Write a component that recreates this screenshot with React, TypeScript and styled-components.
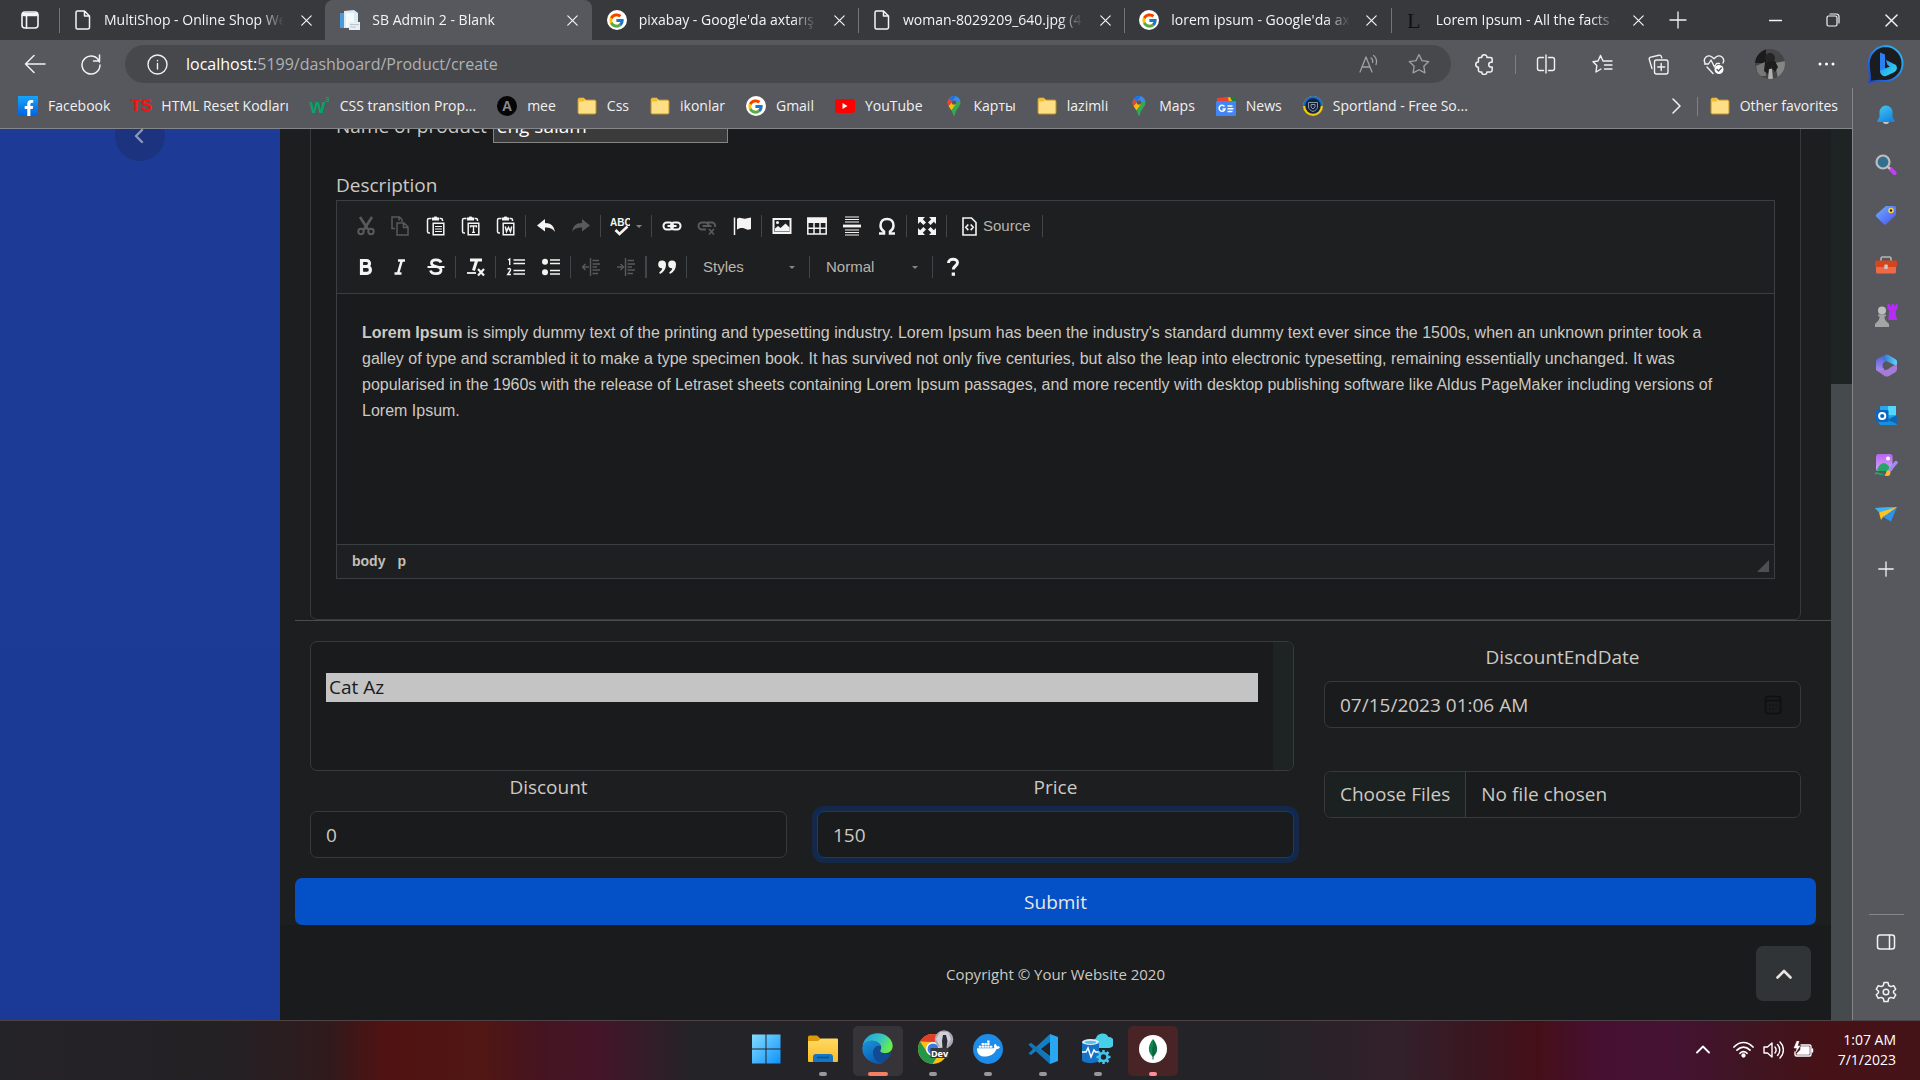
import React from "react";
import styled, { createGlobalStyle, css } from "styled-components";
import { FcGoogle } from "react-icons/fc";
import { FaDocker, FaFacebookF } from "react-icons/fa";

const ui = `"Open Sans", "Noto Sans", sans-serif`;
const arial = `"Liberation Sans", Arial, sans-serif`;

const GlobalStyle = createGlobalStyle`
  *, *::before, *::after { box-sizing: border-box; }
  html, body, #root { height: 100%; }
  body { margin: 0; background: #191b1c; font-family: ${ui}; color: #cdc9c3; overflow: hidden; }
  button, input, select { font: inherit; color: inherit; margin: 0; }
  button { border: 0; padding: 0; background: none; cursor: pointer; }
  svg { display: block; flex: none; }
  a { color: inherit; text-decoration: none; }
`;

/* ---------- frame ---------- */
const Screen = styled.div`
  height: 100vh;
  display: grid;
  grid-template-rows: 40px minmax(0, 1fr) 60px;
`;
const Center = styled.div`
  display: flex;
  align-items: center;
  justify-content: center;
`;
const Line = styled.svg<{ $w?: number }>`
  fill: none;
  stroke: currentColor;
  stroke-width: ${(p) => p.$w ?? 1.3};
  stroke-linecap: round;
  stroke-linejoin: round;
`;

/* ---------- tabs ---------- */
const TabStrip = styled.header`
  display: flex;
  background: #38393d;
  color: #f4f4f4;
  padding-left: 1px;
`;
const TabActions = styled.button`
  width: 58px;
  display: flex;
  align-items: center;
  justify-content: center;
  flex: none;
`;
const Tabs = styled.nav`
  flex: 0 1 1598px;
  display: grid;
  grid-template-columns: repeat(6, minmax(0, 1fr));
`;
const Tab = styled.div<{ $active?: boolean; $divider?: boolean }>`
  display: flex;
  align-items: center;
  gap: 12px;
  padding: 0 9px 0 15px;
  position: relative;
  ${(p) => p.$active && css`background: #57585d; border-radius: 8px 8px 0 0;`}
  ${(p) =>
    p.$divider &&
    css`
      &::before {
        content: "";
        position: absolute;
        left: 0;
        top: 8px;
        height: 25px;
        width: 1px;
        background: #737478;
      }
    `}
`;
const TabTitle = styled.a`
  flex: 1;
  min-width: 0;
  overflow: hidden;
  white-space: nowrap;
  font-size: 14px;
  line-height: 24px;
  mask-image: linear-gradient(90deg, #000 calc(100% - 24px), transparent);
`;
const TabClose = styled.button`
  width: 20px;
  height: 20px;
  display: flex;
  align-items: center;
  justify-content: center;
`;
const NewTab = styled.button`
  width: 42px;
  display: flex;
  align-items: center;
  justify-content: center;
`;
const WindowButtons = styled.div`
  margin-left: auto;
  display: flex;
`;
const WindowButton = styled.button`
  width: 58px;
  display: flex;
  align-items: center;
  justify-content: center;
`;

/* ---------- browser body ---------- */
const Browser = styled.div`
  display: grid;
  grid-template-columns: minmax(0, 1fr) 68px;
  grid-template-rows: 48px 41px minmax(0, 1fr);
  background: #57585d;
  color: #f1f1f1;
  min-height: 0;
`;
const Toolbar = styled.div`
  display: flex;
  align-items: center;
  gap: 4px;
  padding: 0 0 0 9px;
`;
const ToolButton = styled.button`
  width: 52px;
  height: 36px;
  display: flex;
  align-items: center;
  justify-content: center;
`;
const Address = styled.div`
  flex: 1;
  height: 38px;
  border-radius: 19px;
  background: #47484c;
  display: flex;
  align-items: center;
  padding: 0 16px 0 22px;
  margin: 0 4px;
  gap: 18px;
`;
const Url = styled.a`
  flex: 1;
  font-size: 16px;
  line-height: 24px;
  color: #b0b1b3;
  b { font-weight: 400; color: #ffffff; }
`;
const AddressIcon = styled.button`
  width: 32px;
  color: #a0a1a4;
  display: flex;
  justify-content: center;
`;
const ToolDivider = styled.i`
  width: 1px;
  height: 19px;
  background: #808186;
`;
const Favorites = styled.nav`
  display: flex;
  align-items: center;
  gap: 21px;
  padding: 0 14px 4px 18px;
  border-bottom: 1px solid #85868a;
  font-size: 14px;
`;
const Favorite = styled.a`
  display: flex;
  align-items: center;
  gap: 10px;
  white-space: nowrap;
  line-height: 24px;
`;
const FavoritesEnd = styled.div`
  margin-left: auto;
  display: flex;
  align-items: center;
  gap: 12px;
`;
const WordMark = styled.span<{ $color: string; $size: number }>`
  width: 20px;
  font: 700 ${(p) => p.$size}px/20px "Liberation Sans", sans-serif;
  color: ${(p) => p.$color};
  text-align: center;
  display: flex;
  justify-content: center;
  sup { font-size: 8px; line-height: 8px; }
`;
const RoundMark = styled.span<{ $bg: string }>`
  width: 20px;
  height: 20px;
  border-radius: 10px;
  background: ${(p) => p.$bg};
  display: flex;
  align-items: center;
  justify-content: center;
`;

/* ---------- edge side bar ---------- */
const BingCell = styled.button`
  display: flex;
  align-items: center;
  justify-content: center;
`;
const SideBar = styled.aside`
  grid-row: 2 / 4;
  grid-column: 2;
  border-left: 1px solid #85868a;
  display: flex;
  flex-direction: column;
  align-items: center;
  padding: 2px 1px 3px 0;
`;
const SideButton = styled.button<{ $tall?: boolean }>`
  width: 48px;
  height: ${(p) => (p.$tall ? 58 : 50)}px;
  display: flex;
  align-items: center;
  justify-content: center;
  flex: none;
`;
const SideRule = styled.hr`
  width: 35px;
  border: 0;
  border-top: 1px solid #85868a;
  margin: auto 0 2px;
`;

/* ---------- page ---------- */
const Page = styled.div`
  grid-row: 3;
  grid-column: 1;
  display: grid;
  grid-template-columns: 280px minmax(0, 1fr) 21px;
  min-height: 0;
  background: #1d1e20;
  color: #cdc9c3;
`;
const AdminMenu = styled.aside`
  background: linear-gradient(#1c3a96, #1b3a97);
  overflow: hidden;
  display: flex;
  align-items: flex-start;
  justify-content: center;
`;
const MenuToggle = styled.button`
  width: 50px;
  height: 50px;
  border-radius: 25px;
  background: #1c3380;
  color: #8d96b8;
  display: flex;
  align-items: center;
  justify-content: center;
  margin-top: -18px;
  padding-right: 2px;
`;
const ScrollTrack = styled.div`
  background: #1e2324;
  display: flex;
  flex-direction: column;
  justify-content: flex-end;
`;
const ScrollThumb = styled.div`
  height: calc(500% / 7);
  background: #454a4d;
`;
const Content = styled.main`
  overflow: hidden;
  min-height: 0;
  display: flex;
  flex-direction: column;
  justify-content: flex-end;
`;
const ProductForm = styled.form`
  padding-left: 15px;
  font-size: 19px;
  line-height: 30px;
`;
const Card = styled.section`
  margin: 0 30px 0 15px;
  border: 1px solid #37393b;
  border-radius: 7px;
  background: #191b1c;
  padding: 20px 25px 40px;
`;
const NameRow = styled.div`
  display: flex;
  align-items: center;
  gap: 6px;
  margin-bottom: 27px;
`;
const NameInput = styled.input`
  width: 235px;
  height: 35px;
  padding: 1px 3px;
  background: #3b3b3b;
  border: 1px solid #858585;
  color: #ffffff;
`;
const FieldLabel = styled.label<{ $center?: boolean }>`
  display: block;
  text-align: ${(p) => (p.$center ? "center" : "left")};
  ${(p) => p.$center && "margin-bottom: 9px;"}
`;
const Editor = styled.div`
  border: 1px solid #3a3f41;
  font-family: ${arial};
`;
const EditorTools = styled.div`
  background: #1e1f21;
  border-bottom: 1px solid #3a3f41;
  padding: 7px 12px 8px 11px;
  display: flex;
  flex-direction: column;
  gap: 5px;
`;
const ToolRow = styled.div`
  display: flex;
  align-items: center;
  height: 36px;
`;
const EditButton = styled.button<{ $off?: boolean; $wide?: boolean }>`
  width: ${(p) => (p.$wide ? 46 : 35)}px;
  height: 34px;
  display: flex;
  align-items: center;
  justify-content: center;
  gap: 6px;
  color: ${(p) => (p.$off ? "#595a5b" : "#f5f4f2")};
`;
const SourceButton = styled(EditButton)`
  width: auto;
  padding: 0 9px 0 13px;
  font-size: 15px;
  span { color: #b9b4ac; }
`;
const EditSeparator = styled.i`
  width: 1px;
  height: 22px;
  margin: 0 2px;
  background: #434648;
  & + & { margin-left: -2px; }
`;
const Combo = styled.div`
  width: 118px;
  display: grid;
  align-items: center;
  select {
    grid-area: 1 / 1;
    appearance: none;
    background: none;
    border: 0;
    padding: 0 10px 0 14px;
    height: 30px;
    font-size: 15px;
    color: #b9b4ac;
  }
  svg { grid-area: 1 / 1; justify-self: end; margin-right: 12px; pointer-events: none; }
`;
const EditArea = styled.div`
  height: 250px;
  padding: 26px 32px 24px 25px;
  font-size: 16px;
  line-height: 26px;
  outline: none;
  p { margin: 0; }
`;
const PathBar = styled.div`
  background: #1e1f21;
  border-top: 1px solid #3a3f41;
  height: 34px;
  display: flex;
  align-items: center;
  gap: 12px;
  padding: 0 5px 2px 15px;
  font-size: 14px;
  font-weight: 700;
  color: #c4bfb7;
  svg { margin-left: auto; align-self: flex-end; margin-bottom: 4px; }
`;
const Divider = styled.hr`
  border: 0;
  border-top: 1px solid #4a4c4e;
  margin: 0 0 20px;
`;
const Fields = styled.div`
  display: grid;
  grid-template-columns: repeat(3, minmax(0, 1fr));
  gap: 30px;
  padding: 0 30px 0 15px;
  margin-bottom: 20px;
`;
const LeftFields = styled.div`
  grid-column: span 2;
  display: grid;
  grid-template-columns: repeat(2, minmax(0, 1fr));
  column-gap: 30px;
`;
const RightFields = styled.div`
  padding-top: 1px;
`;
const control = css`
  display: block;
  width: 100%;
  background: #191b1c;
  border: 1px solid #37393b;
  border-radius: 7px;
  outline: 0;
`;
const CategoryBox = styled.div`
  ${control}
  grid-column: span 2;
  display: grid;
  grid-template-columns: minmax(0, 1fr) 20px;
  height: 130px;
  margin-bottom: 1px;
  overflow: hidden;
`;
const CategoryTrack = styled.div`
  background: #1e2324;
`;
const CategoryList = styled.select`
  border: 0;
  outline: 0;
  background: none;
  padding: 2px 15px;
  overflow: hidden;
  option {
    height: 29px;
    min-height: 29px;
    padding: 1px 3px 0;
    line-height: 28px;
  }
  option:checked {
    background: #c4c4c4 linear-gradient(#c4c4c4, #c4c4c4);
    color: #191b1c;
  }
`;
const TextInput = styled.input<{ $focused?: boolean }>`
  ${control}
  height: 47px;
  padding: 8px 15px 7px;
  ${(p) => p.$focused && css`border-color: #053d91; box-shadow: 0 0 0 5px #14284a;`}
`;
const DateBox = styled.div`
  ${control}
  height: 47px;
  display: flex;
  align-items: center;
  padding: 0 15px;
  margin-bottom: 43px;
  input { flex: 1; min-width: 0; border: 0; background: none; outline: 0; padding: 0; }
  button { color: #0f1011; width: 24px; display: flex; justify-content: center; }
`;
const FileInput = styled.input`
  ${control}
  height: 47px;
  padding: 0;
  line-height: 45px;
  &::file-selector-button {
    font: inherit;
    color: inherit;
    height: 45px;
    padding: 0 15px;
    margin-right: 15px;
    border: 0;
    border-right: 1px solid #3a3f41;
    border-radius: 6px 0 0 6px;
    background: #1b2021;
  }
`;
const Submit = styled.button`
  display: block;
  width: calc(100% - 15px);
  height: 47px;
  padding-top: 1px;
  border-radius: 7px;
  background: #0350c7;
  color: #e8e6e3;
`;
const Footer = styled.footer`
  height: 95px;
  flex: none;
  background: #191b1c;
  display: grid;
  grid-template-columns: 75px 1fr 75px;
  align-items: center;
  padding: 2px 20px 0;
  text-align: center;
  font-size: 15px;
  line-height: 20px;
  span { grid-column: 2; }
`;
const ToTop = styled.a`
  width: 55px;
  height: 55px;
  justify-self: end;
  border-radius: 7px;
  background: #303436;
  color: #e8e6e3;
  display: flex;
  align-items: center;
  justify-content: center;
`;

/* ---------- task bar ---------- */
const TaskBar = styled.footer`
  border-top: 1px solid #4e4448;
  background: linear-gradient(90deg, #242328 0, #242125 12%, #301a1c 17%, #501212 20%, #501713 25%,
    #461420 28%, #451428 31%, #242327 36%, #242328 66%, #33202a 73%, #3a1620 77%, #450f18 80%,
    #461030 83%, #451234 87%, #3f1522 91%, #461217 95%, #441318 100%);
  display: grid;
  grid-template-columns: 1fr auto 1fr;
  align-items: center;
  color: #ffffff;
`;
const Apps = styled.div`
  grid-column: 2;
  display: flex;
  gap: 5px;
`;
const AppButton = styled.button<{ $bg?: string; $bar?: string; $barWidth?: number }>`
  width: 50px;
  height: 50px;
  border-radius: 5px;
  background: ${(p) => p.$bg ?? "transparent"};
  display: grid;
  grid-template-rows: 46px 4px;
  justify-items: center;
  align-items: center;
  &::after {
    content: "";
    width: ${(p) => p.$barWidth ?? 8}px;
    height: 4px;
    border-radius: 2px;
    background: ${(p) => p.$bar ?? "#98979a"};
  }
`;
const Tray = styled.div`
  display: flex;
  justify-content: flex-end;
  align-items: center;
  gap: 9px;
  padding: 0 24px 2px 0;
`;
const TrayUp = styled.button`
  margin-right: 14px;
`;
const Clock = styled.time`
  margin-left: 5px;
  width: 68px;
  white-space: nowrap;
  display: flex;
  flex-direction: column;
  align-items: flex-end;
  font-size: 14px;
  line-height: 20px;
`;

/* ---------- drawings ---------- */
const PageIcon = () => (
  <Line width="18" height="20" viewBox="0 0 18 20" $w={1.5}>
    <path d="M3.5 1h7l5 5v11.500a1.500 1.500 0 0 1-1.500 1.500H3.500A1.500 1.500 0 0 1 2 17.500v-15A1.500 1.500 0 0 1 3.500 1zM10.500 1v5h5" />
  </Line>
);
const BlankPageIcon = () => (
  <svg width="20" height="20" viewBox="0 0 20 20">
    <path d="M0 3h5v15H0z" fill="#4b9bd8" />
    <path d="M4 1l10-1 4 3v15H4z" fill="#d9ecf7" />
    <path d="M6 3h8v14H6z" fill="#f5fafd" />
    <path d="M9 12h11v8H9z" fill="#e8eef3" />
    <path d="M10 14.500h9M10 17h6" stroke="#b9c6d0" />
  </svg>
);
const GoogleIcon = () => (
  <RoundMark $bg="#fff"><FcGoogle size={17} /></RoundMark>
);
const LetterIcon = () => (
  <svg width="18" height="18" viewBox="0 0 18 18"><text x="1" y="17" fontFamily="Liberation Serif, serif" fontSize="22" fill="#111">L</text></svg>
);
const CloseIcon = ({ s = 11 }: { s?: number }) => (
  <Line width={s} height={s} viewBox="0 0 11 11" $w={1.2}><path d="M.8.8l9.400 9.400M10.200.8L.8 10.200" /></Line>
);
const FolderIcon = () => (
  <svg width="20" height="20" viewBox="0 0 20 20">
    <path d="M1 3.500A1.500 1.500 0 0 1 2.500 2h4.200L9 4h8.500A1.500 1.500 0 0 1 19 5.500v11a1.500 1.500 0 0 1-1.500 1.500h-15A1.500 1.500 0 0 1 1 16.500z" fill="#ffdf85" stroke="#c19222" />
    <path d="M1.500 3.500a1 1 0 0 1 1-1h4L8 4 6.500 5.500h-5z" fill="#f4bd2c" />
  </svg>
);
const PinIcon = () => (
  <svg width="20" height="20" viewBox="0 0 20 20">
    <defs><clipPath id="pin"><path d="M10 0a6.500 6.500 0 0 0-6.500 6.500c0 4.500 5 6.500 5.700 12.700.1.600 1.500.6 1.600 0C11.500 13 16.500 11 16.500 6.500A6.500 6.500 0 0 0 10 0z" /></clipPath></defs>
    <g clipPath="url(#pin)">
      <path d="M0 0h20v20H0z" fill="#34a853" />
      <path d="M3 0h14v5L10 7z" fill="#4285f4" />
      <path d="M2 1l8 5.500L4 13 1 10z" fill="#ea4335" />
      <path d="M3 12l7-8 2 4-6 8z" fill="#fbbc04" />
      <path d="M4 0h8L8 5 5 3z" fill="#1a73e8" />
    </g>
    <circle cx="10" cy="6.500" r="2.300" fill="#57585d" />
  </svg>
);
const YoutubeIcon = () => (
  <svg width="20" height="20" viewBox="0 0 20 20"><rect x="0" y="3" width="20" height="14" rx="3" fill="#f00" /><path d="M7.500 7l5 3-5 3z" fill="#fff" /></svg>
);
const NewsIcon = () => (
  <svg width="20" height="20" viewBox="0 0 20 20">
    <path d="M4 1h15v6H4z" fill="#188038" /><path d="M2 3l12-2 3 6H2z" fill="#fbbc04" /><path d="M1 2l11-1 1 6H1z" fill="#ea4335" />
    <rect y="5" width="20" height="15" rx="1" fill="#4285f4" />
    <path d="M8.500 10.500a3 3 0 1 0 .5 2.500H6.500M11.500 10h5M11.500 12.700h6M11.500 15.400h5" fill="none" stroke="#fff" strokeWidth="1.500" />
  </svg>
);
const SportIcon = () => (
  <svg width="20" height="20" viewBox="0 0 20 20">
    <circle cx="10" cy="10" r="10" fill="#f2c812" /><path d="M0 10a10 10 0 0 1 20 0z" fill="#1769d2" />
    <circle cx="10" cy="10" r="7.700" fill="#10233b" />
    <path d="M5.500 6.500h9V11c0 2-2 3.500-4.500 4.500C7.500 14.500 5.500 13 5.500 11z" fill="none" stroke="#8797a8" />
    <path d="M8 8.500h4V11l-2 2-2-2z" fill="none" stroke="#8797a8" />
  </svg>
);
const BingIcon = () => (
  <svg width="38" height="40" viewBox="0 0 38 40">
    <defs>
      <linearGradient id="bingRim" x1="0" y1="1" x2="1" y2="0"><stop stopColor="#1a45d8" /><stop offset="1" stopColor="#2bc0f5" /></linearGradient>
      <linearGradient id="bingB" x1="0" y1="0" x2="1" y2="1"><stop stopColor="#2b8cf8" /><stop offset="1" stopColor="#2fe0e8" /></linearGradient>
    </defs>
    <path d="M19 2a17.500 17.500 0 1 1-2 35c-6-1-9 .5-14.500 1 1.500-5-.8-10-.8-18.500A17.500 17.500 0 0 1 19 2z" fill="#1b1c20" stroke="url(#bingRim)" strokeWidth="2" />
    <path d="M13 8.500l5 2v14.500l-5 3z" fill="#2a80f2" />
    <path d="M13 27L18 24.500l5-2-2.500-1.500-1.500-5 10 5c2 3.500.5 6-2.500 7.500l-7.500 3.500c-3 1-6-2-6-5z" fill="url(#bingB)" />
  </svg>
);
const edge = {
  bell: (
    <svg width="22" height="22" viewBox="0 0 22 22"><defs><linearGradient id="bell" x2="0.6" y2="1"><stop stopColor="#45c8f4" /><stop offset="1" stopColor="#1789e0" /></linearGradient></defs><path d="M8 18h6c-.5 2.700-5.500 2.700-6 0z" fill="#c4c4c4" /><path d="M11 1.500a6.500 6.500 0 0 1 6.500 6.500v5l2 3.500c.3.700 0 1.500-.8 1.500H3.300c-.8 0-1.100-.8-.8-1.500l2-3.500V8A6.500 6.500 0 0 1 11 1.500z" fill="url(#bell)" /></svg>
  ),
  search: (
    <svg width="22" height="22" viewBox="0 0 22 22"><path d="M15.500 15l4 4" stroke="#c53df5" strokeWidth="4" strokeLinecap="round" /><path d="M12.500 12.500l2.500 2.300" stroke="#c4c4c4" strokeWidth="2.500" /><circle cx="8" cy="8" r="6.500" fill="#31708f" stroke="#bdbdbd" strokeWidth="2.200" /></svg>
  ),
  tag: (
    <svg width="22" height="22" viewBox="0 0 22 22"><defs><linearGradient id="tag" x2="1" y2="1"><stop stopColor="#6db4ff" /><stop offset="1" stopColor="#4b4dec" /></linearGradient></defs><path d="M11 2h8a2 2 0 0 1 2 2v7l-9.500 9a2 2 0 0 1-2.800 0L1.500 13a2 2 0 0 1 0-2.800z" fill="url(#tag)" /><circle cx="16" cy="6.500" r="2" fill="#222" stroke="#ffd23c" strokeWidth="1.500" /></svg>
  ),
  toolbox: (
    <svg width="24" height="22" viewBox="0 0 24 22"><path d="M7 7V4.500A1.500 1.500 0 0 1 8.500 3h7A1.500 1.500 0 0 1 17 4.500V7" fill="none" stroke="#b7b7b7" strokeWidth="1.600" /><path d="M2 11h20v7a1.500 1.500 0 0 1-1.500 1.500h-17A1.500 1.500 0 0 1 2 18z" fill="#ef6a44" /><rect x="1" y="6.500" width="22" height="6.500" rx="1" fill="#d3451e" /><rect x="10.300" y="10.500" width="3.500" height="4.500" rx="1" fill="#c9c9c9" /></svg>
  ),
  games: (
    <svg width="24" height="24" viewBox="0 0 24 24"><path d="M13.500 1h2.500v2h1.500V1h2.500v2h1.500V1h2v5l-2 1.500.8 7 1.200 2.500h-9V14l.8-6.500-1.800-1.500z" fill="#b62cf7" /><circle cx="8" cy="7.500" r="4" fill="#bdbdbd" /><path d="M4 11.500h8v1.500l-1.500.5c0 3 1 4 2.500 5.500l2 2V24H1v-3l2-2c1.500-1.500 2.500-2.500 2.500-5.500L4 13z" fill="#a5a5a5" /></svg>
  ),
  m365: (
    <svg width="23" height="23" viewBox="0 0 23 23"><defs><linearGradient id="m1" x2="0" y2="1"><stop stopColor="#4b63d8" /><stop offset="1" stopColor="#b58cf0" /></linearGradient><linearGradient id="m2" x2="1"><stop stopColor="#3170c8" /><stop offset="1" stopColor="#5bd7fb" /></linearGradient></defs><path d="M10 1L3 4.500A3.500 3.500 0 0 0 1 8v8l4 2.500 4-2V9l2-3 2-4z" fill="url(#m1)" /><path d="M10 1c1-.7 2.500-.7 3.500 0l6.500 4a3 3 0 0 1 2 3v4l-7-3-7-3z" fill="url(#m2)" /><path d="M2 16.500l8-.5 6-3 6-3v5a4 4 0 0 1-2 3.500l-6 3.500c-1.500.8-3 .8-4.500 0z" fill="#a67ad8" /><path d="M11.500 7.200l3.800 2.100v4.500l-3.800 2.200-3.800-2.200V9.300z" fill="#57585d" /></svg>
  ),
  outlook: (
    <svg width="23" height="21" viewBox="0 0 23 21"><rect x="5" y="1" width="16" height="17" rx="1" fill="#28a8ea" /><path d="M13 1h8v9h-8z" fill="#50d9ff" /><path d="M3 17l19-7v8.500a1.500 1.500 0 0 1-1.500 1.500H5z" fill="#1490df" /><path d="M13 15l9-5v9z" fill="#0f65b0" /><rect x="1" y="5" width="12.500" height="12" rx="1" fill="#0a66c0" /><circle cx="7.200" cy="11" r="3.100" fill="none" stroke="#fff" strokeWidth="2" /></svg>
  ),
  image: (
    <svg width="24" height="24" viewBox="0 0 24 24"><defs><linearGradient id="im" x2="0" y2="1"><stop stopColor="#b765f2" /><stop offset="1" stopColor="#d6a5f5" /></linearGradient></defs><rect x="2" y="1" width="16.500" height="17" rx="2.500" fill="url(#im)" /><path d="M3 16.500c4-8 8-8 12-3l1 4.500H4.500z" fill="#25a56a" /><circle cx="14" cy="5.500" r="2" fill="#fff" /><path d="M14.500 18.500l7.500-9" stroke="#a18cf2" strokeWidth="3.500" strokeLinecap="round" /><path d="M10 22c3-.5 1.500-4.500 4-4.500s3 2 2 4-4 2-6 .5z" fill="#ffb92c" /><path d="M1 21c3-3 5 2 8 0" fill="none" stroke="#25a56a" strokeWidth="1.800" /></svg>
  ),
  send: (
    <svg width="24" height="18" viewBox="0 0 24 18"><path d="M1 2l22-1-10 9z" fill="#52bff5" /><path d="M23 1l-6 14.500-8-4.500z" fill="#2f93ec" /><path d="M1 2l4 4.500L23 1z" fill="#3fb2f0" /><path d="M5 6.500L23 1 9 11l-2 3z" fill="#ffc21f" /></svg>
  ),
};
const StarPath = "M8.500 1.200l2.300 4.700 5.200.7-3.800 3.600.9 5.200-4.600-2.500-4.600 2.500.9-5.200L1 6.600l5.200-.7z";

/* editor icons are drawn on a 20px grid */
const Glyph = ({ children }: { children: React.ReactNode }) => (
  <svg width="20" height="20" viewBox="0 0 20 20" fill="none" stroke="currentColor" strokeWidth="1.500">{children}</svg>
);
const Clip = ({ children }: { children?: React.ReactNode }) => (
  <Glyph>
    <path d="M5.500 2.500H3a1.500 1.500 0 0 0-1.500 1.500v11.500A1.500 1.500 0 0 0 3 17h1M13.500 2.500H15a1.500 1.500 0 0 1 1.500 1.500v1" />
    <path d="M6 1.500h1.500l1-1h2l1 1H13v3H6z" fill="currentColor" stroke="none" />
    <path d="M7.200 7.200h10.600v11.600H7.200z" />
    {children}
  </Glyph>
);
const bold = { fill: "currentColor", stroke: "none" } as const;
const g = {
  cut: <Glyph><path d="M4 1l8 12.500M16 1L8 13.500" strokeWidth="2.600" /><circle cx="5" cy="15.500" r="2.700" strokeWidth="2" /><circle cx="15" cy="15.500" r="2.700" strokeWidth="2" /></Glyph>,
  copy: <Glyph><path d="M4 12.500H1V1h7.500L11 3.500V6M8 1v3.500" /><path d="M6 7h7l4 4v8H6zM12.500 7v4.500H17" /></Glyph>,
  paste: <Clip><path d="M9 10.500h7M9 13h7M9 15.500h7" strokeWidth="1.200" /></Clip>,
  pasteText: <Clip><path d="M9.500 11.500v-1.500h6v1.500M12.500 10v6.500M11 16.300h3" strokeWidth="1.300" /></Clip>,
  pasteWord: <Clip><path d="M9.300 10.500l1.200 5 2-4 2 4 1.200-5" strokeWidth="1.500" /></Clip>,
  undo: <Glyph><path d="M9 3v4c6 0 9 3 10 9-2.500-3.500-5-4.500-10-4.500v4L1 9.500z" {...bold} /></Glyph>,
  redo: <Glyph><path d="M11 3v4C5 7 2 10 1 16c2.500-3.500 5-4.500 10-4.500v4l8-6z" {...bold} /></Glyph>,
  spell: <Glyph><text x="0" y="10" fontSize="10" fontWeight="700" fontFamily="Liberation Sans, sans-serif" {...bold}>ABC</text><path d="M5.500 14l4 4L17.500 10.500" strokeWidth="2.600" /></Glyph>,
  link: <Glyph><rect x="1.500" y="6.500" width="9.500" height="7" rx="3.200" strokeWidth="2" /><rect x="9" y="6.500" width="9.500" height="7" rx="3.200" strokeWidth="2" /><path d="M5.500 10h9" strokeWidth="2" /></Glyph>,
  unlink: <Glyph><path d="M9 13.500H5A3.500 3.500 0 0 1 5 6.500h3.500A3 3 0 0 1 11.500 9M10 6.500h5A3.500 3.500 0 0 1 18 11M5.500 10h9" strokeWidth="2" /><path d="M12 13l5 5.500M17 13l-5 5.500" strokeWidth="1.800" /></Glyph>,
  flag: <Glyph><path d="M2.500 1.500v17.500" /><path d="M5 3c3-3 6 1 9-.5L19 1.500V13c-4 1.500-5 0-7-.7-3-.8-5 0-7 1.200z" {...bold} /></Glyph>,
  image: <Glyph><path d="M1.500 3h17v14h-17z" strokeWidth="2" /><path d="M3 15.500v-3l3-2.500 2.500 2 5-4.500 4 4v4z" {...bold} /><circle cx="5.500" cy="6.500" r="1.500" {...bold} /></Glyph>,
  table: <Glyph><path d="M.8 2h18.400v16H.8z" /><path d="M.8 2h18.400v5H.8z" {...bold} /><path d="M1 12.200h18M7 7v11M13 7v11" /></Glyph>,
  rule: <Glyph><path d="M3 1h14M3 3.500h14M3 6h14M3 14h14M3 16.500h14M3 19h14" strokeWidth="1.200" /><path d="M1 10h18" strokeWidth="2.800" /></Glyph>,
  omega: <Glyph><path d="M2 17.500h5v-2C4.500 14 3.500 12 3.500 9.500 3.500 5.500 6 3 10 3s6.500 2.500 6.500 6.500c0 2.500-1 4.500-3.500 6v2h5" strokeWidth="2.500" /></Glyph>,
  maximize: <Glyph><path d="M1 1h7L5.800 3.200 9 6.400 6.400 9 3.200 5.800 1 8zM19 1v7l-2.200-2.200L13.600 9 11 6.400l3.200-3.200L12 1zM1 19v-7l2.200 2.200L6.400 11 9 13.600l-3.200 3.200L8 19zM19 19h-7l2.200-2.200L11 13.600l2.600-2.600 3.200 3.200L19 12z" {...bold} /></Glyph>,
  source: <svg width="15" height="19" viewBox="0 0 15 19" fill="none" stroke="currentColor" strokeWidth="1.600"><path d="M1 1h8.500L14 5.500V18H1zM6.300 7.500L3.800 10.300l2.500 2.800M8.700 7.500l2.500 2.800-2.500 2.800" /></svg>,
  bold: <Glyph><path d="M5.500 3.500h5a3 3 0 0 1 0 6h-5zM5.500 9.500H11a3.400 3.400 0 0 1 0 6.800H5.500z" strokeWidth="3.200" /></Glyph>,
  italic: <Glyph><path d="M7 3.500h7M3.500 16.500h7M10.800 3.500L7 16.500" strokeWidth="2.500" /></Glyph>,
  strike: <Glyph><path d="M15 5.500c-1-3.500-9.500-3.500-9.500.5 0 5 9.500 2 9.500 7s-9.500 4.500-10.500.5" strokeWidth="2.800" /><path d="M1.500 10h17" strokeWidth="2" /></Glyph>,
  clear: <Glyph><path d="M4 3h12M10.800 3L7.500 13.500" strokeWidth="3" /><path d="M1 16h9" strokeWidth="1.800" /><path d="M12 12l6 6.500M18 12l-6 6.500" strokeWidth="2.200" /></Glyph>,
  ol: <Glyph><path d="M7.500 3h11.500M7.500 6.500h11.500M7.500 13.500h11.500M7.500 17h11.500" strokeWidth="1.700" /><path d="M2 3l1.700-1v6M1.500 12c3-1.500 3.500.5 2.500 2L1.700 17.500H5" strokeWidth="1.400" /></Glyph>,
  ul: <Glyph><path d="M9 3h10M9 6.500h10M9 13.500h10M9 17h10" strokeWidth="1.700" /><circle cx="4" cy="4.800" r="3" {...bold} /><circle cx="4" cy="15.200" r="3" {...bold} /></Glyph>,
  outdent: <Glyph><path d="M9.500 1v18M11.500 3.500H18M11.500 7H19M11.500 10H16M11.500 13H19M11.500 16.500H17M1.500 10H8M4.500 7l-3 3 3 3" strokeWidth="1.400" /></Glyph>,
  indent: <Glyph><path d="M9.500 1v18M11.500 3.500H18M11.500 7H19M11.500 10H16M11.500 13H19M11.500 16.500H17M1 10h6.500M4.500 7l3 3-3 3" strokeWidth="1.400" /></Glyph>,
  quote: <Glyph><path d="M5 3.500a4 4 0 0 1 4 4c0 4-2 7.500-6 9.500l-.8-1.500c2-1.500 3-2.800 3-4.200A3.900 3.900 0 0 1 5 3.500zM15 3.500a4 4 0 0 1 4 4c0 4-2 7.500-6 9.500l-.8-1.500c2-1.500 3-2.800 3-4.200A3.900 3.900 0 0 1 15 3.500z" {...bold} /></Glyph>,
  help: <Glyph><path d="M5.500 6c0-5 9-5 9-.5 0 3.500-4.200 3.500-4.200 7" strokeWidth="3" /><path d="M8.700 15.500h3.300v3.300H8.700z" {...bold} /></Glyph>,
};
const Caret = () => <svg width="6" height="3" viewBox="0 0 6 3"><path d="M0 0h6L3 3z" fill="#8c8478" /></svg>;

type Tool = { id: string; icon: React.ReactNode; off?: boolean } | "|";
const clipboardTools: Tool[] = [
  { id: "Cut", icon: g.cut, off: true }, { id: "Copy", icon: g.copy, off: true }, { id: "Paste", icon: g.paste },
  { id: "Paste as plain text", icon: g.pasteText }, { id: "Paste from Word", icon: g.pasteWord }, "|",
  { id: "Undo", icon: g.undo }, { id: "Redo", icon: g.redo, off: true }, "|",
];
const insertTools: Tool[] = [
  "|", { id: "Link", icon: g.link }, { id: "Unlink", icon: g.unlink, off: true }, { id: "Anchor", icon: g.flag }, "|",
  { id: "Image", icon: g.image }, { id: "Table", icon: g.table }, { id: "Insert horizontal line", icon: g.rule },
  { id: "Insert special character", icon: g.omega }, "|", { id: "Maximize", icon: g.maximize }, "|",
];
const formatTools: Tool[] = [
  { id: "Bold", icon: g.bold }, { id: "Italic", icon: g.italic }, { id: "Strikethrough", icon: g.strike }, "|",
  { id: "Remove format", icon: g.clear }, "|", { id: "Numbered list", icon: g.ol }, { id: "Bulleted list", icon: g.ul }, "|",
  { id: "Decrease indent", icon: g.outdent, off: true }, { id: "Increase indent", icon: g.indent, off: true }, "|", "|",
  { id: "Block quote", icon: g.quote }, "|",
];
const ToolSet = ({ tools }: { tools: Tool[] }) => (
  <>
    {tools.map((t, i) =>
      t === "|" ? <EditSeparator key={i} /> : (
        <EditButton key={i} type="button" aria-label={t.id} $off={t.off}>{t.icon}</EditButton>
      )
    )}
  </>
);

const tabs = [
  { title: "MultiShop - Online Shop Website", icon: <PageIcon /> },
  { title: "SB Admin 2 - Blank", icon: <BlankPageIcon />, active: true },
  { title: "pixabay - Google'da axtarış", icon: <GoogleIcon /> },
  { title: "woman-8029209_640.jpg (427×640)", icon: <PageIcon />, divider: true },
  { title: "lorem ipsum - Google'da axtarış", icon: <GoogleIcon />, divider: true },
  { title: "Lorem Ipsum - All the facts - Lipsum", icon: <LetterIcon />, divider: true },
];

const favorites = [
  { name: "Facebook", icon: <svg width="20" height="20" viewBox="0 0 20 20"><defs><linearGradient id="fb" x2="0" y2="1"><stop stopColor="#18a4fb" /><stop offset="1" stopColor="#0062e0" /></linearGradient></defs><path d="M0 0h20v20H0z" fill="url(#fb)" /><g transform="translate(3 4)" color="#fff"><FaFacebookF size={16} /></g></svg> },
  { name: "HTML Reset Kodları", icon: <WordMark $color="#fb0f0c" $size={17}>TS</WordMark> },
  { name: "CSS transition Prop...", icon: <WordMark $color="#04a468" $size={20}>w<sup>3</sup></WordMark> },
  { name: "mee", icon: <RoundMark $bg="#050505"><WordMark $color="#8a8b90" $size={14}>A</WordMark></RoundMark> },
  { name: "Css", icon: <FolderIcon /> },
  { name: "ikonlar", icon: <FolderIcon /> },
  { name: "Gmail", icon: <GoogleIcon /> },
  { name: "YouTube", icon: <YoutubeIcon /> },
  { name: "Карты", icon: <PinIcon /> },
  { name: "lazimli", icon: <FolderIcon /> },
  { name: "Maps", icon: <PinIcon /> },
  { name: "News", icon: <NewsIcon /> },
  { name: "Sportland - Free So...", icon: <SportIcon /> },
];

const Avatar = () => (
  <svg width="30" height="30" viewBox="0 0 30 30">
    <defs><clipPath id="av"><circle cx="15" cy="15" r="15" /></clipPath></defs>
    <g clipPath="url(#av)">
      <path d="M0 0h30v30H0z" fill="#454545" /><path d="M0 0h11v14H0z" fill="#1b1b1b" />
      <path d="M20 14l10-2v14l-7 4z" fill="#858585" /><path d="M1 17l9-4 1 14H3z" fill="#777" />
      <circle cx="15" cy="9" r="5" fill="#242424" /><path d="M10 13l10-1 3 6-3 5-4-5-3 7-4-3z" fill="#1d1d1d" /><path d="M14 20l3 0 1 10h-5z" fill="#b0b0b0" />
    </g>
  </svg>
);

const apps = [
  {
    id: "Start", bar: "transparent",
    icon: <svg width="32" height="30" viewBox="1 0 32 30"><defs><linearGradient id="win" x2="1" y2="1"><stop stopColor="#86dcff" /><stop offset="1" stopColor="#0c93fb" /></linearGradient></defs><path d="M.5.500h14v14H.5zM15.500.500h14v14h-14zM.5 15.500h14v14H.5zM15.500 15.500h14v14h-14z" fill="url(#win)" /></svg>,
  },
  {
    id: "File Explorer",
    icon: <svg width="30" height="28" viewBox="0 0 30 28"><defs><linearGradient id="fe" x2="0" y2="1"><stop stopColor="#ffd964" /><stop offset="1" stopColor="#f9bc26" /></linearGradient></defs><path d="M0 2a1.500 1.500 0 0 1 1.500-1.500H9L13 4v5H0z" fill="#dc9a08" /><path d="M0 6h10l3-2.500h16a1 1 0 0 1 1 1V26a1 1 0 0 1-1 1H1a1 1 0 0 1-1-1z" fill="url(#fe)" /><path d="M5 27v-5a3 3 0 0 1 3-3h14a3 3 0 0 1 3 3v5z" fill="#1375c8" /><path d="M9 22.500h12" stroke="#0b4d86" strokeWidth="1.500" /></svg>,
  },
  {
    id: "Microsoft Edge", bg: "#363438", bar: "#f57f61", barWidth: 20,
    icon: <svg width="31" height="31" viewBox="0 0 30 30"><defs><linearGradient id="e1" x2="1" y2=".4"><stop stopColor="#1ba0e0" /><stop offset=".6" stopColor="#35c3c4" /><stop offset="1" stopColor="#66eb50" /></linearGradient><linearGradient id="e2" x2=".5" y2="1"><stop stopColor="#1b95dc" /><stop offset="1" stopColor="#0b5cb0" /></linearGradient></defs><path d="M.5 13C1.500 5.500 7.500.3 15 .3c8.500 0 14.700 6 14.700 12.200 0 4.500-3.300 7-7.200 7-3 0-5-1-5-2.200 0-.8 1-1.300 1-3.300C18.500 10.500 14 7.500 9.500 7.500c-4 0-7 2-9 5.500z" fill="url(#e1)" /><path d="M.3 14C1.500 10 5 7.500 9.500 7.500c4.500 0 8.500 2.500 9 5.500-2-1-6 0-7.300 4-1.500 5.500 3 12 9 12.200C11 32-.5 25 .3 14z" fill="url(#e2)" /><path d="M11 17c1-3.500 4-5 7-4.500.8 2-.5 3.500-.5 4.800 0 2 5.500 4.200 9.500 2.200 1-.5 1.500 0 1 .8-1.500 3-4.500 7-8.500 8.700-5-.5-10-6-8.500-12z" fill="#124a94" /></svg>,
  },
  {
    id: "Chrome Dev",
    icon: (
      <svg width="42" height="38" viewBox="-4 2 42 38"><circle cx="17" cy="21" r="15" fill="#fbc116" /><path d="M4 13.500A15 15 0 0 1 30 13.500L17 14z" fill="#e33b2e" /><path d="M4 13.500A15 15 0 0 0 16.500 36l7-11L11 24z" fill="#249645" /><circle cx="17" cy="21" r="7" fill="#fff" /><circle cx="17" cy="21" r="5.500" fill="#3b78e7" /><circle cx="28" cy="11.500" r="9.300" fill="#a9a9b2" /><path d="M24 4l8 0 3 7-5 9-6-1-4-8z" fill="#d0d0d8" /><path d="M27 7h3l1.500 6-1 7h-4l-.5-7z" fill="#2c2c38" /><rect x="14.500" y="20" width="18" height="10" fill="#38383b" /><text x="23.500" y="28.500" fontSize="9" fontWeight="700" fill="#fff" textAnchor="middle" fontFamily="Open Sans, sans-serif">Dev</text></svg>
    ),
  },
  {
    id: "Docker Desktop",
    icon: <svg width="30" height="30" viewBox="0 0 30 30"><circle cx="15" cy="15" r="15" fill="#1d8ce8" /><g transform="translate(4 3)" color="#fff"><FaDocker size={23} /></g></svg>,
  },
  {
    id: "Visual Studio Code",
    icon: <svg width="30" height="30" viewBox="0 0 30 30"><path d="M22 0L8 13 3 9 .5 10.500 5 15 .5 19.500 3 21l5-4 14 13V22l-9-7 9-7z" fill="#0f7fc9" /><path d="M3 9l19 14.500V30L.5 10.500z" fill="#1673b4" /><path d="M22 0l8 3v24l-8 3V22V8z" fill="#2aa7f2" /></svg>,
  },
  {
    id: "Azure Data Studio",
    icon: <svg width="31" height="31" viewBox="0 0 31 31"><path d="M14 13a4.500 4.500 0 0 1 0-8 7 7 0 0 1 12.500-1A5.500 5.500 0 0 1 27 15H16z" fill="#45cfe8" /><path d="M0 9v18c0 4 17 4 17 0V9z" fill="#1672c4" /><ellipse cx="8.500" cy="9" rx="8.500" ry="3" fill="#d9eefb" /><ellipse cx="8.500" cy="9.300" rx="6" ry="1.600" fill="#55bfe8" /><path d="M0 19h4l2-4 3 9 3-7 1.500 2H17" fill="none" stroke="#fff" strokeWidth="1.500" /><circle cx="21.500" cy="24" r="4" fill="none" stroke="#43c6ea" strokeWidth="2.600" /><g stroke="#43c6ea" strokeWidth="2.500"><path d="M21.500 17v3M21.500 28v3M14.500 24h3M25.500 24h3M16.500 19l2 2M24.500 27l2 2M26.500 19l-2 2M18.500 27l-2 2" /></g></svg>,
  },
  {
    id: "MongoDB Compass", bg: "#482427", bar: "#ff8d98",
    icon: <svg width="28" height="28" viewBox="0 0 28 28"><circle cx="14" cy="14" r="14" fill="#fff" /><path d="M14 4c5 6 6 13 0 18z" fill="#0b6b43" /><path d="M14 4c-5 6-6 13 0 18z" fill="#10854f" /><path d="M14 12v12.500" stroke="#0a5a38" /></svg>,
  },
];

export default function App() {
  return (
    <Screen>
      <GlobalStyle />
      <TabStrip>
        <TabActions aria-label="Tab actions">
          <Line width="20" height="20" viewBox="0 0 20 20" $w={1.6}><rect x="2" y="2" width="16" height="16" rx="3" /><path d="M3.500 4.500h13" strokeWidth="3.500" /><path d="M6.500 6v12" /></Line>
        </TabActions>
        <Tabs aria-label="Tabs">
          {tabs.map((t, i) => (
            <Tab key={i} $active={t.active} $divider={t.divider || i === 0}>
              <Center>{t.icon}</Center>
              <TabTitle href="#">{t.title}</TabTitle>
              <TabClose aria-label="Close tab"><CloseIcon /></TabClose>
            </Tab>
          ))}
        </Tabs>
        <NewTab aria-label="New tab"><Line width="18" height="18" viewBox="0 0 18 18"><path d="M9 1v16M1 9h16" /></Line></NewTab>
        <WindowButtons>
          <WindowButton aria-label="Minimize"><Line width="13" height="13" viewBox="0 0 13 13"><path d="M.5 6.500h12" /></Line></WindowButton>
          <WindowButton aria-label="Restore"><Line width="14" height="14" viewBox="0 0 14 14" $w={1.2}><rect x="1" y="3" width="10" height="10" rx="1.500" /><path d="M4 1h6.500A2.500 2.500 0 0 1 13 3.500V10" /></Line></WindowButton>
          <WindowButton aria-label="Close"><CloseIcon s={13} /></WindowButton>
        </WindowButtons>
      </TabStrip>

      <Browser>
        <Toolbar>
          <ToolButton aria-label="Back"><Line width="22" height="20" viewBox="0 0 22 20" $w={1.5}><path d="M21 10H1.500M10 1.500L1.500 10l8.500 8.500" /></Line></ToolButton>
          <ToolButton aria-label="Refresh"><Line width="22" height="22" viewBox="0 0 22 22" $w={1.5}><path d="M19.500 9A9 9 0 1 0 20 12M19.500 2v6h-6" /></Line></ToolButton>
          <Address>
            <Line width="21" height="21" viewBox="0 0 21 21" $w={1.4}><circle cx="10.500" cy="10.500" r="9.500" /><path d="M10.500 9.500v5.500M10.500 6.500v.2" /></Line>
            <Url href="#"><b>localhost:</b>5199/dashboard/Product/create</Url>
            <AddressIcon aria-label="Read aloud"><Line width="20" height="20" viewBox="0 0 20 20"><path d="M1 18L7 3l6 15M3.200 13h7.600M12 4c1.500 1 2 3 1.500 4.500M14.500 1.500c3 2 3.800 6 2.500 9" /></Line></AddressIcon>
            <AddressIcon aria-label="Add to favorites"><Line width="22" height="22" viewBox="0 0 17 17" $w={1}><path d={StarPath} /></Line></AddressIcon>
          </Address>
          <ToolButton aria-label="Extensions"><Line width="22" height="22" viewBox="1 0 20 20" $w={1.4}><path d="M8 4a2.400 2.400 0 0 1 4.800 0H16a1.500 1.500 0 0 1 1.500 1.500v3h-1a2 2 0 0 0 0 4.200h1v3A1.500 1.500 0 0 1 16 17.200h-3.200a2.400 2.400 0 0 1-4.800 0H6.500A1.500 1.500 0 0 1 5 15.700v-2.800a2.400 2.400 0 0 1 0-4.800V5.500A1.500 1.500 0 0 1 6.500 4z" /></Line></ToolButton>
          <ToolDivider />
          <ToolButton aria-label="Split screen"><Line width="20" height="20" viewBox="0 0 20 20" $w={1.4}><path d="M7.500 3.500h-4A2 2 0 0 0 1.500 5.500v9a2 2 0 0 0 2 2h4M12.500 3.500h4a2 2 0 0 1 2 2v9a2 2 0 0 1-2 2h-4M10 1v18" /></Line></ToolButton>
          <ToolButton aria-label="Favorites"><Line width="21" height="20" viewBox="0 0 21 20" $w={1.4}><path d="M13 7h-2L8.500 1.500 6 7l-5 .8 3.800 3.700L4 18l5-3M14 7h6M12.500 11h7.500M12.500 15h7.500" /></Line></ToolButton>
          <ToolButton aria-label="Collections"><Line width="21" height="21" viewBox="0 0 21 21" $w={1.4}><path d="M4 14.500L1.300 5.500a2 2 0 0 1 1.400-2.400L11 1.200a2 2 0 0 1 2.400 1.400l.3 1.200" /><rect x="6.500" y="6" width="13.500" height="14" rx="2" /><path d="M13.200 9.500v7M9.700 13h7" /></Line></ToolButton>
          <ToolButton aria-label="Browser essentials"><Line width="22" height="21" viewBox="0 0 22 21" $w={1.4}><path d="M2 9C-.5 4 5 0 9 3l2 1.800L13 3c4-3 9.500 1 7 6M1.500 10h4L8 6l3.500 7 2-3.500h3M4 13l6 6.500" /><circle cx="16" cy="15.500" r="4.500" fill="#fff" stroke="none" /><path d="M14 15.500l1.500 1.500 2.800-3" stroke="#57585d" /></Line></ToolButton>
          <ToolButton aria-label="Profile"><Avatar /></ToolButton>
          <ToolButton aria-label="Settings and more"><svg width="17" height="4" viewBox="0 0 17 4" fill="#fff"><circle cx="2" cy="2" r="1.500" /><circle cx="8.500" cy="2" r="1.500" /><circle cx="15" cy="2" r="1.500" /></svg></ToolButton>
        </Toolbar>
        <BingCell aria-label="Bing chat"><BingIcon /></BingCell>

        <Favorites aria-label="Favorites bar">
          {favorites.map((f) => (
            <Favorite href="#" key={f.name}>{f.icon}{f.name}</Favorite>
          ))}
          <FavoritesEnd>
            <Line width="20" height="16" viewBox="0 0 20 16" $w={1.5}><path d="M8 1l7 7-7 7" /></Line>
            <ToolDivider />
            <Favorite href="#"><FolderIcon />Other favorites</Favorite>
          </FavoritesEnd>
        </Favorites>

        <SideBar aria-label="Edge sidebar">
          {Object.entries(edge).map(([id, icon]) => (
            <SideButton key={id} aria-label={id}>{icon}</SideButton>
          ))}
          <SideButton $tall aria-label="Customize"><Line width="16" height="16" viewBox="0 0 16 16"><path d="M8 .8v14.400M.8 8h14.400" /></Line></SideButton>
          <SideRule />
          <SideButton aria-label="Hide sidebar"><Line width="20" height="18" viewBox="0 0 20 18" $w={1.5}><rect x="1.500" y="2" width="17" height="14" rx="2.500" /><path d="M13.500 2v14" /></Line></SideButton>
          <SideButton aria-label="Sidebar settings"><Line width="22" height="22" viewBox="0 0 22 22" $w={1.5}><path d="M9 1.500h4l.7 3 2 1.100 3-.9 2 3.500L18.500 10.300v1.400l2.200 2.100-2 3.500-3-.9-2 1.100-.7 3H9l-.7-3-2-1.100-3 .9-2-3.500 2.200-2.100v-1.400L1.300 8.200l2-3.500 3 .9 2-1.100z" /><circle cx="11" cy="11" r="2.800" /></Line></SideButton>
        </SideBar>

        <Page>
          <AdminMenu>
            <MenuToggle aria-label="Toggle menu"><Line width="10" height="16" viewBox="0 0 10 16" $w={2.4}><path d="M8 2L2 8l6 6" /></Line></MenuToggle>
          </AdminMenu>
          <Content>
            <ProductForm onSubmit={(e) => e.preventDefault()}>
              <Card>
                <NameRow>
                  <label htmlFor="name">Name of product</label>
                  <NameInput id="name" defaultValue="eng salam" />
                </NameRow>
                <FieldLabel id="description-label" as="div">Description</FieldLabel>
                <Editor>
                  <EditorTools role="toolbar" aria-label="Editor toolbars">
                    <ToolRow>
                      <ToolSet tools={clipboardTools} />
                      <EditButton type="button" $wide aria-label="Spell check">{g.spell}<Caret /></EditButton>
                      <ToolSet tools={insertTools} />
                      <SourceButton type="button">{g.source}<span>Source</span></SourceButton>
                      <EditSeparator />
                    </ToolRow>
                    <ToolRow>
                      <ToolSet tools={formatTools} />
                      <Combo><select aria-label="Styles"><option>Styles</option></select><Caret /></Combo>
                      <EditSeparator />
                      <Combo><select aria-label="Paragraph format"><option>Normal</option></select><Caret /></Combo>
                      <EditSeparator />
                      <EditButton type="button" aria-label="About">{g.help}</EditButton>
                    </ToolRow>
                  </EditorTools>
                  <EditArea contentEditable suppressContentEditableWarning spellCheck={false} role="textbox" aria-labelledby="description-label">
                    <p>
                      <strong>Lorem Ipsum</strong> is simply dummy text of the printing and typesetting industry. Lorem Ipsum has been the industry's standard dummy text ever since the 1500s, when an unknown printer took a galley of type and scrambled it to make a type specimen book. It has survived not only five centuries, but also the leap into electronic typesetting, remaining essentially unchanged. It was popularised in the 1960s with the release of Letraset sheets containing Lorem Ipsum passages, and more recently with desktop publishing software like Aldus PageMaker including versions of Lorem Ipsum.
                    </p>
                  </EditArea>
                  <PathBar>
                    <a href="#">body</a>
                    <a href="#">p</a>
                    <svg width="12" height="12" viewBox="0 0 12 12"><path d="M12 0v12H0z" fill="#4b5052" /></svg>
                  </PathBar>
                </Editor>
              </Card>
              <Divider />
              <Fields>
                <LeftFields>
                  <CategoryBox>
                    <CategoryList multiple size={4} aria-label="Category" defaultValue={["cat"]}>
                      <option value=""></option>
                      <option value="cat">Cat Az</option>
                    </CategoryList>
                    <CategoryTrack />
                  </CategoryBox>
                  <div>
                    <FieldLabel $center htmlFor="discount">Discount</FieldLabel>
                    <TextInput id="discount" inputMode="numeric" defaultValue="0" />
                  </div>
                  <div>
                    <FieldLabel $center htmlFor="price">Price</FieldLabel>
                    <TextInput id="price" inputMode="numeric" defaultValue="150" $focused />
                  </div>
                </LeftFields>
                <RightFields>
                  <FieldLabel $center htmlFor="end-date">DiscountEndDate</FieldLabel>
                  <DateBox>
                    <input id="end-date" defaultValue="07/15/2023 01:06 AM" />
                    <button type="button" aria-label="Pick a date">
                      <Line width="20" height="20" viewBox="0 0 20 20" $w={1.6}><rect x="2.500" y="1.500" width="15" height="17" rx="2.500" /><path d="M3 5.500h14M7 10.200h.2M10 10.200h.2M13 10.200h.2M7 14h.2M10 14h.2" /></Line>
                    </button>
                  </DateBox>
                  <FileInput type="file" multiple aria-label="Product photos" />
                </RightFields>
              </Fields>
              <Submit type="submit">Submit</Submit>
            </ProductForm>
            <Footer>
              <span>Copyright © Your Website 2020</span>
              <ToTop href="#" aria-label="Back to top"><Line width="18" height="12" viewBox="0 0 18 12" $w={2.6}><path d="M2.500 9.500L9 3l6.500 6.500" /></Line></ToTop>
            </Footer>
          </Content>
          <ScrollTrack><ScrollThumb /></ScrollTrack>
        </Page>
      </Browser>

      <TaskBar>
        <Apps>
          {apps.map((a) => (
            <AppButton key={a.id} aria-label={a.id} $bg={a.bg} $bar={a.bar} $barWidth={a.barWidth}>{a.icon}</AppButton>
          ))}
        </Apps>
        <Tray>
          <TrayUp aria-label="Show hidden icons"><Line width="14" height="9" viewBox="0 0 14 9" $w={1.8}><path d="M1 7.500l6-6 6 6" /></Line></TrayUp>
          <Line width="21" height="17" viewBox="0 0 21 17" $w={1.7}><path d="M1 6c5.500-6 13.500-6 19 0M4 9.200c4-4.200 9-4.200 13 0M7 12.300c2-2.200 5-2.200 7 0" /><circle cx="10.500" cy="14.500" r="1.300" fill="currentColor" /></Line>
          <Line width="21" height="18" viewBox="0 0 21 18" $w={1.4}><path d="M1 6h3.500L9 2v14l-4.500-4H1zM12 6c1.500 2 1.500 4 0 6M14.500 3.500c3 3 3 8 0 11M17 1c4.500 4.500 4.500 11.500 0 16" /></Line>
          <Line width="21" height="18" viewBox="0 0 21 18" $w={1.4}><path d="M8 4h8.500A1.500 1.500 0 0 1 18 5.500v8a1.500 1.500 0 0 1-1.500 1.500h-13A1.500 1.500 0 0 1 2 13.500V11M19.500 8v3" /><path d="M8 6h8v7H4l4-4z" fill="currentColor" /><path d="M4 0L1 7h3l-1 4 4-6H4.500L6 0z" fill="currentColor" strokeWidth="0.500" /></Line>
          <Clock><span>1:07 AM</span><span>7/1/2023</span></Clock>
        </Tray>
      </TaskBar>
    </Screen>
  );
}
